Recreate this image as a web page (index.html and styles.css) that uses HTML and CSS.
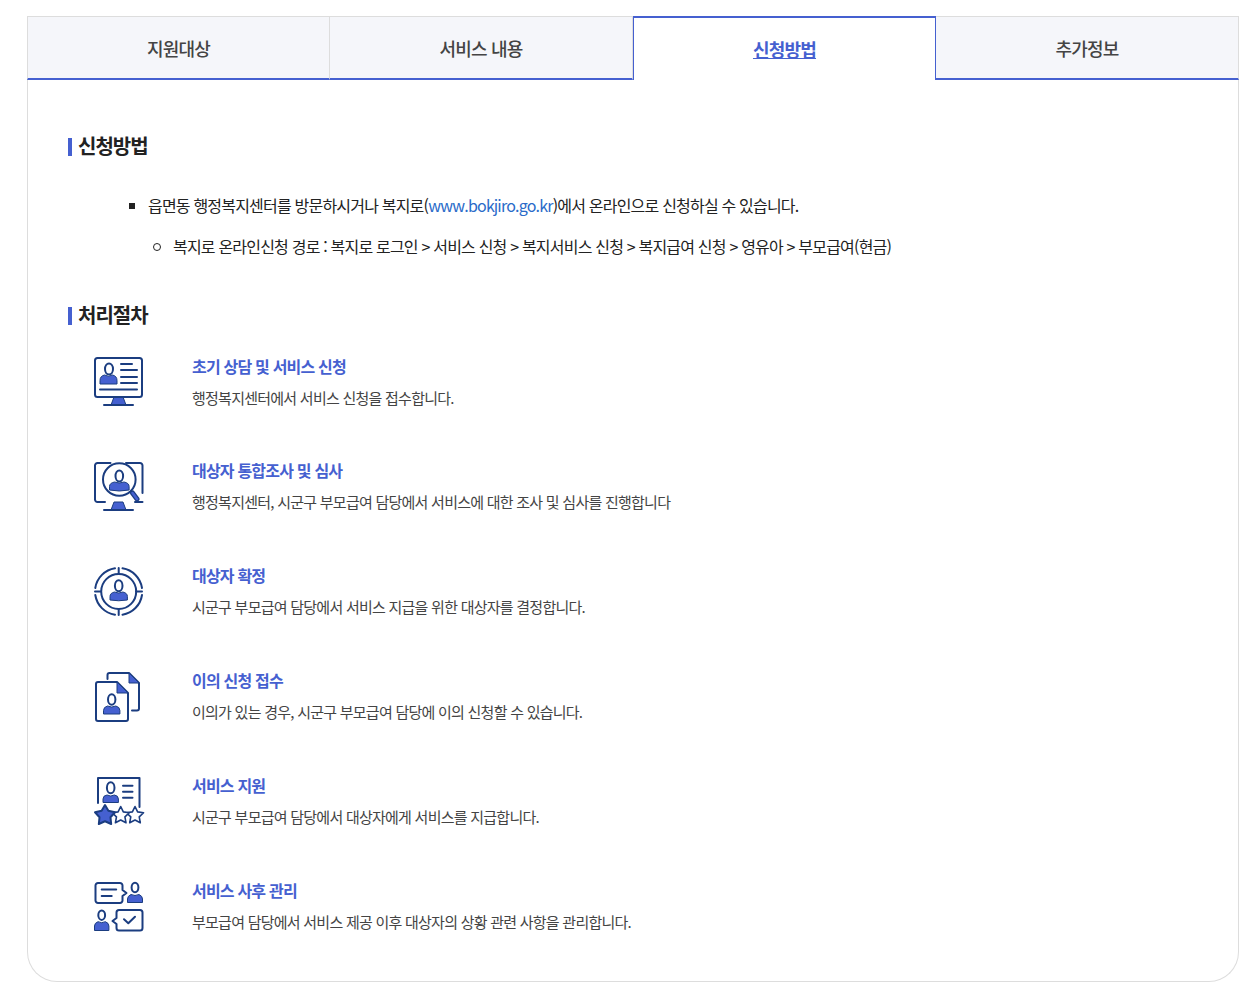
FILE: index.html
```html
<!DOCTYPE html>
<html lang="ko">
<head>
<meta charset="utf-8">
<title>신청방법</title>
<link rel="stylesheet" href="styles.css">
</head>
<body>
<main class="panel">
  <nav class="tabs">
    <a class="tab tab-first" href="#">지원대상</a>
    <a class="tab tab-second" href="#">서비스 내용</a>
    <a class="tab tab-active" href="#">신청방법</a>
    <a class="tab tab-last" href="#">추가정보</a>
  </nav>
  <div class="content">
    <h2 class="heading">신청방법</h2>
    <ul class="list">
      <li class="list-item">읍면동 행정복지센터를 방문하시거나 복지로(<a class="link" href="#">www.bokjiro.go.kr</a>)에서 온라인으로 신청하실 수 있습니다.
        <ul class="sublist">
          <li class="sublist-item">복지로 온라인신청 경로 : 복지로 로그인 &gt; 서비스 신청 &gt; 복지서비스 신청 &gt; 복지급여 신청 &gt; 영유아 &gt; 부모급여(현금)</li>
        </ul>
      </li>
    </ul>
    <h2 class="heading heading-second">처리절차</h2>
    <ol class="steps">
      <li class="step">
        <svg class="icon" viewBox="0 0 50 50">
          <path class="fill" d="M20 40h9l3 8H17z"/>
          <path class="line" d="M10 48h29"/>
          <rect class="line" x="1" y="1" width="47" height="39" rx="2.500"/>
          <ellipse class="line" cx="15" cy="12" rx="4" ry="5.500"/>
          <path class="fill" d="M6 27v-3.500q0-4.500 4.500-5.500q4 2.500 8 0q4.500 1 4.500 5.500v3.500z"/>
          <path class="line" d="M27 7h11M27 13h16M27 20h16M27 26h16M6 32.500h37"/>
        </svg>
        <div class="step-body">
          <h3 class="step-title">초기 상담 및 서비스 신청</h3>
          <p class="step-text">행정복지센터에서 서비스 신청을 접수합니다.</p>
        </div>
      </li>
      <li class="step">
        <svg class="icon" viewBox="0 0 50 50">
          <path class="fill" d="M20 40h9l3 8H17z"/>
          <path class="line" d="M10 48h29M16.500 1H3.500A2.500 2.500 0 0 0 1 3.500v34A2.500 2.500 0 0 0 3.500 40H11M32 1h14a2.500 2.500 0 0 1 2.500 2.500V31M41 40h7.500"/>
          <circle class="line" cx="25.300" cy="17.500" r="16.300"/>
          <path class="handle-outer" d="M38.500 31l4.500 6"/>
          <path class="handle-inner" d="M38.500 31l4.500 6"/>
          <ellipse class="line" cx="25.300" cy="14" rx="3.800" ry="5.500"/>
          <path class="fill" d="M15.500 28v-3.500q0-3.500 5-4.500q4.800 2 9.600 0q5 1 5 4.500v3.500q-9.800 2-19.600 0z"/>
        </svg>
        <div class="step-body">
          <h3 class="step-title">대상자 통합조사 및 심사</h3>
          <p class="step-text">행정복지센터, 시군구 부모급여 담당에서 서비스에 대한 조사 및 심사를 진행합니다</p>
        </div>
      </li>
      <li class="step">
        <svg class="icon" viewBox="0 0 50 50">
          <path class="line" d="M24.700 1v6M24.700 42v6M1 24.500h6M42 24.500h6"/>
          <path class="line" d="M21 1.300A23.500 23.500 0 0 0 1.300 21M28.500 1.300A23.500 23.500 0 0 1 48 21M48 28A23.500 23.500 0 0 1 28.500 47.700M21 47.700A23.500 23.500 0 0 1 1.300 28"/>
          <circle class="line" cx="24.700" cy="24.500" r="17.500"/>
          <ellipse class="line" cx="24.700" cy="18.700" rx="3.800" ry="5.500"/>
          <path class="fill" d="M16 33v-3.500q0-3.500 4.500-4.500q4.200 2 8.400 0q4.500 1 4.500 4.500v3.500q-8.700 1.500-17.400 0z"/>
        </svg>
        <div class="step-body">
          <h3 class="step-title">대상자 확정</h3>
          <p class="step-text">시군구 부모급여 담당에서 서비스 지급을 위한 대상자를 결정합니다.</p>
        </div>
      </li>
      <li class="step">
        <svg class="icon" viewBox="0 0 50 50">
          <path class="line" d="M13.500 7V3a2 2 0 0 1 2-2H35l10 10v25.500a2 2 0 0 1-2 2h-5"/>
          <path class="fill" d="M35 1l10 10H35z"/>
          <path class="line" d="M4 10h19l11 11v26a2 2 0 0 1-2 2H4a2 2 0 0 1-2-2V12a2 2 0 0 1 2-2z"/>
          <path class="fill" d="M23 10l11 11H23z"/>
          <ellipse class="line" cx="17.700" cy="27.500" rx="3.700" ry="5.300"/>
          <path class="fill" d="M9.500 42v-3.500q0-3.500 4-4.500q4.200 2 8.400 0q4 1 4 4.500V42z"/>
        </svg>
        <div class="step-body">
          <h3 class="step-title">이의 신청 접수</h3>
          <p class="step-text">이의가 있는 경우, 시군구 부모급여 담당에 이의 신청할 수 있습니다.</p>
        </div>
      </li>
      <li class="step">
        <svg class="icon" viewBox="0 0 50 50">
          <path class="line" d="M4 26V1h41.500v29"/>
          <ellipse class="line" cx="16.700" cy="10.700" rx="3.800" ry="5.500"/>
          <path class="fill" d="M9 25.500v-3.500q0-3.500 4-4q3.700 2 7.400 0q4 .5 4 4v3.500z"/>
          <path class="line" d="M29 8.700h9.500M29 14.700h9.500M29 20.700h9.500"/>
          <path class="star star-off" transform="translate(41 38.500) scale(9)" d="M0-1L.29-.4.951-.309.47.153.588.809 0 .5-.588.809-.47.153-.951-.309-.29-.4z"/>
          <path class="star star-off" transform="translate(26.700 38.500) scale(9)" d="M0-1L.29-.4.951-.309.47.153.588.809 0 .5-.588.809-.47.153-.951-.309-.29-.4z"/>
          <path class="star star-on" transform="translate(11 38.500) scale(10.500)" d="M0-1L.323-.445.951-.309.523.17.588.809 0 .55-.588.809-.523.17-.951-.309-.323-.445z"/>
        </svg>
        <div class="step-body">
          <h3 class="step-title">서비스 지원</h3>
          <p class="step-text">시군구 부모급여 담당에서 대상자에게 서비스를 지급합니다.</p>
        </div>
      </li>
      <li class="step">
        <svg class="icon" viewBox="0 0 50 50">
          <path class="line" d="M4 1h22a2.500 2.500 0 0 1 2.500 2.500V8l4 3-4 3v4.500A2.500 2.500 0 0 1 26 21H4a2.500 2.500 0 0 1-2.500-2.500v-15A2.500 2.500 0 0 1 4 1zM7.700 7.500h14.500M7.700 14h10"/>
          <ellipse class="line" cx="41" cy="5.500" rx="3.400" ry="4.700"/>
          <path class="fill" d="M33.500 20.500v-3.500q0-3 3.500-4.500q4 2 8 0q3.500 1.500 3.500 4.500v3.500z"/>
          <path class="line" d="M25 28h21a2.500 2.500 0 0 1 2.500 2.500V46a2.500 2.500 0 0 1-2.500 2.500H25a2.500 2.500 0 0 1-2.500-2.500v-4l-4-3 4-3v-5.500A2.500 2.500 0 0 1 25 28z"/>
          <path class="line" d="M30 37.300l4.300 4 6.700-6.500"/>
          <ellipse class="line" cx="7.700" cy="33.200" rx="3.400" ry="4.700"/>
          <path class="fill" d="M.5 48.500V44q0-3 3.500-4.300q3.700 2 7.400 0q3.500 1.300 3.500 4.300v4.500z"/>
        </svg>
        <div class="step-body">
          <h3 class="step-title">서비스 사후 관리</h3>
          <p class="step-text">부모급여 담당에서 서비스 제공 이후 대상자의 상황 관련 사항을 관리합니다.</p>
        </div>
      </li>
    </ol>
  </div>
</main>
</body>
</html>
```

FILE: styles.css
```css
* { box-sizing: border-box; }
html, body { margin: 0; padding: 0; background: #fff; }
body {
  padding: 16px 18px 18px 27px;
  font-family: "Noto Sans CJK KR", "Noto Sans", sans-serif;
  color: #222;
}
.panel {
  height: 966px;
  border: 1px solid #ddd;
  border-top: 0;
  border-radius: 0 0 30px 30px;
}
.tabs { display: flex; height: 64px; margin: 0 -1px; }
.tab {
  flex: 0 0 25%;
  display: flex;
  align-items: center;
  justify-content: center;
  background: #f5f6fa;
  border-top: 1px solid #ddd;
  border-bottom: 2px solid #4560d0;
  color: #444;
  font-size: 18px;
  font-weight: 500;
  letter-spacing: -0.8px;
  text-decoration: none;
}
.tab-first { border-left: 1px solid #ddd; border-right: 1px solid #ddd; }
.tab-second { border-right: 1px solid #ddd; }
.tab-last { border-right: 1px solid #ddd; }
.tab-active {
  background: #fff;
  border-top: 2px solid #4560d0;
  border-left: 1px solid #4560d0;
  border-right: 1px solid #4560d0;
  border-bottom: 0;
  color: #4560d0;
  font-weight: 700;
  text-decoration: underline;
}
.content { padding: 51px 40px 0; }
.heading {
  margin: 0;
  position: relative;
  padding-left: 10px;
  font-size: 20px;
  line-height: 30px;
  font-weight: 700;
  letter-spacing: -1px;
  color: #222;
  display: flex;
  align-items: center;
}
.heading::before {
  content: "";
  position: absolute;
  left: 0;
  top: 7px;
  width: 4px;
  height: 18px;
  background: #4560d0;
}
.heading-second { margin-top: 39px; }
.list {
  list-style: none;
  margin: 29px 0 0;
  padding: 0 0 0 80px;
  font-size: 16px;
  line-height: 30px;
  letter-spacing: -0.8px;
}
.list-item { position: relative; }
.list-item::before {
  content: "";
  position: absolute;
  left: -19px;
  top: 13px;
  width: 6px;
  height: 6px;
  background: #222;
}
.sublist { list-style: none; margin: 11px 0 0; padding: 0 0 0 25px; }
.sublist-item { position: relative; }
.sublist-item::before {
  content: "";
  position: absolute;
  left: -20px;
  top: 12px;
  width: 6px;
  height: 6px;
  border: 1px solid #222;
  border-radius: 50%;
}
.link { color: #2a6bc9; text-decoration: none; }
.steps {
  list-style: none;
  margin: 27px 0 0;
  padding: 0 0 0 26px;
  display: flex;
  flex-direction: column;
  gap: 55px;
}
.step { display: flex; align-items: flex-start; height: 50px; gap: 48px; }
.icon { width: 50px; height: 50px; flex: none; overflow: visible; }
.line { fill: none; stroke: #1b3d80; stroke-width: 2; stroke-linecap: round; stroke-linejoin: round; }
.fill { fill: #4560d0; stroke: #1b3d80; stroke-width: 1; stroke-linejoin: round; }
.handle-outer { fill: none; stroke: #1b3d80; stroke-width: 5; stroke-linecap: round; }
.handle-inner { fill: none; stroke: #4560d0; stroke-width: 2.500; stroke-linecap: round; }
.star { stroke: #1b3d80; stroke-linejoin: round; vector-effect: non-scaling-stroke; }
.star-on { fill: #4560d0; stroke-width: 2; }
.star-off { fill: #fff; stroke-width: 1.6; }
.step-body { min-width: 0; margin-top: -3px; }
.step:first-child .step-body { margin-top: -2px; }
.step-title {
  margin: 0;
  font-size: 16px;
  line-height: 22px;
  font-weight: 700;
  letter-spacing: -0.8px;
  color: #4560d0;
}
.step-text {
  margin: 10px 0 0;
  font-size: 15px;
  line-height: 22px;
  letter-spacing: -0.75px;
  color: #444;
}
```
